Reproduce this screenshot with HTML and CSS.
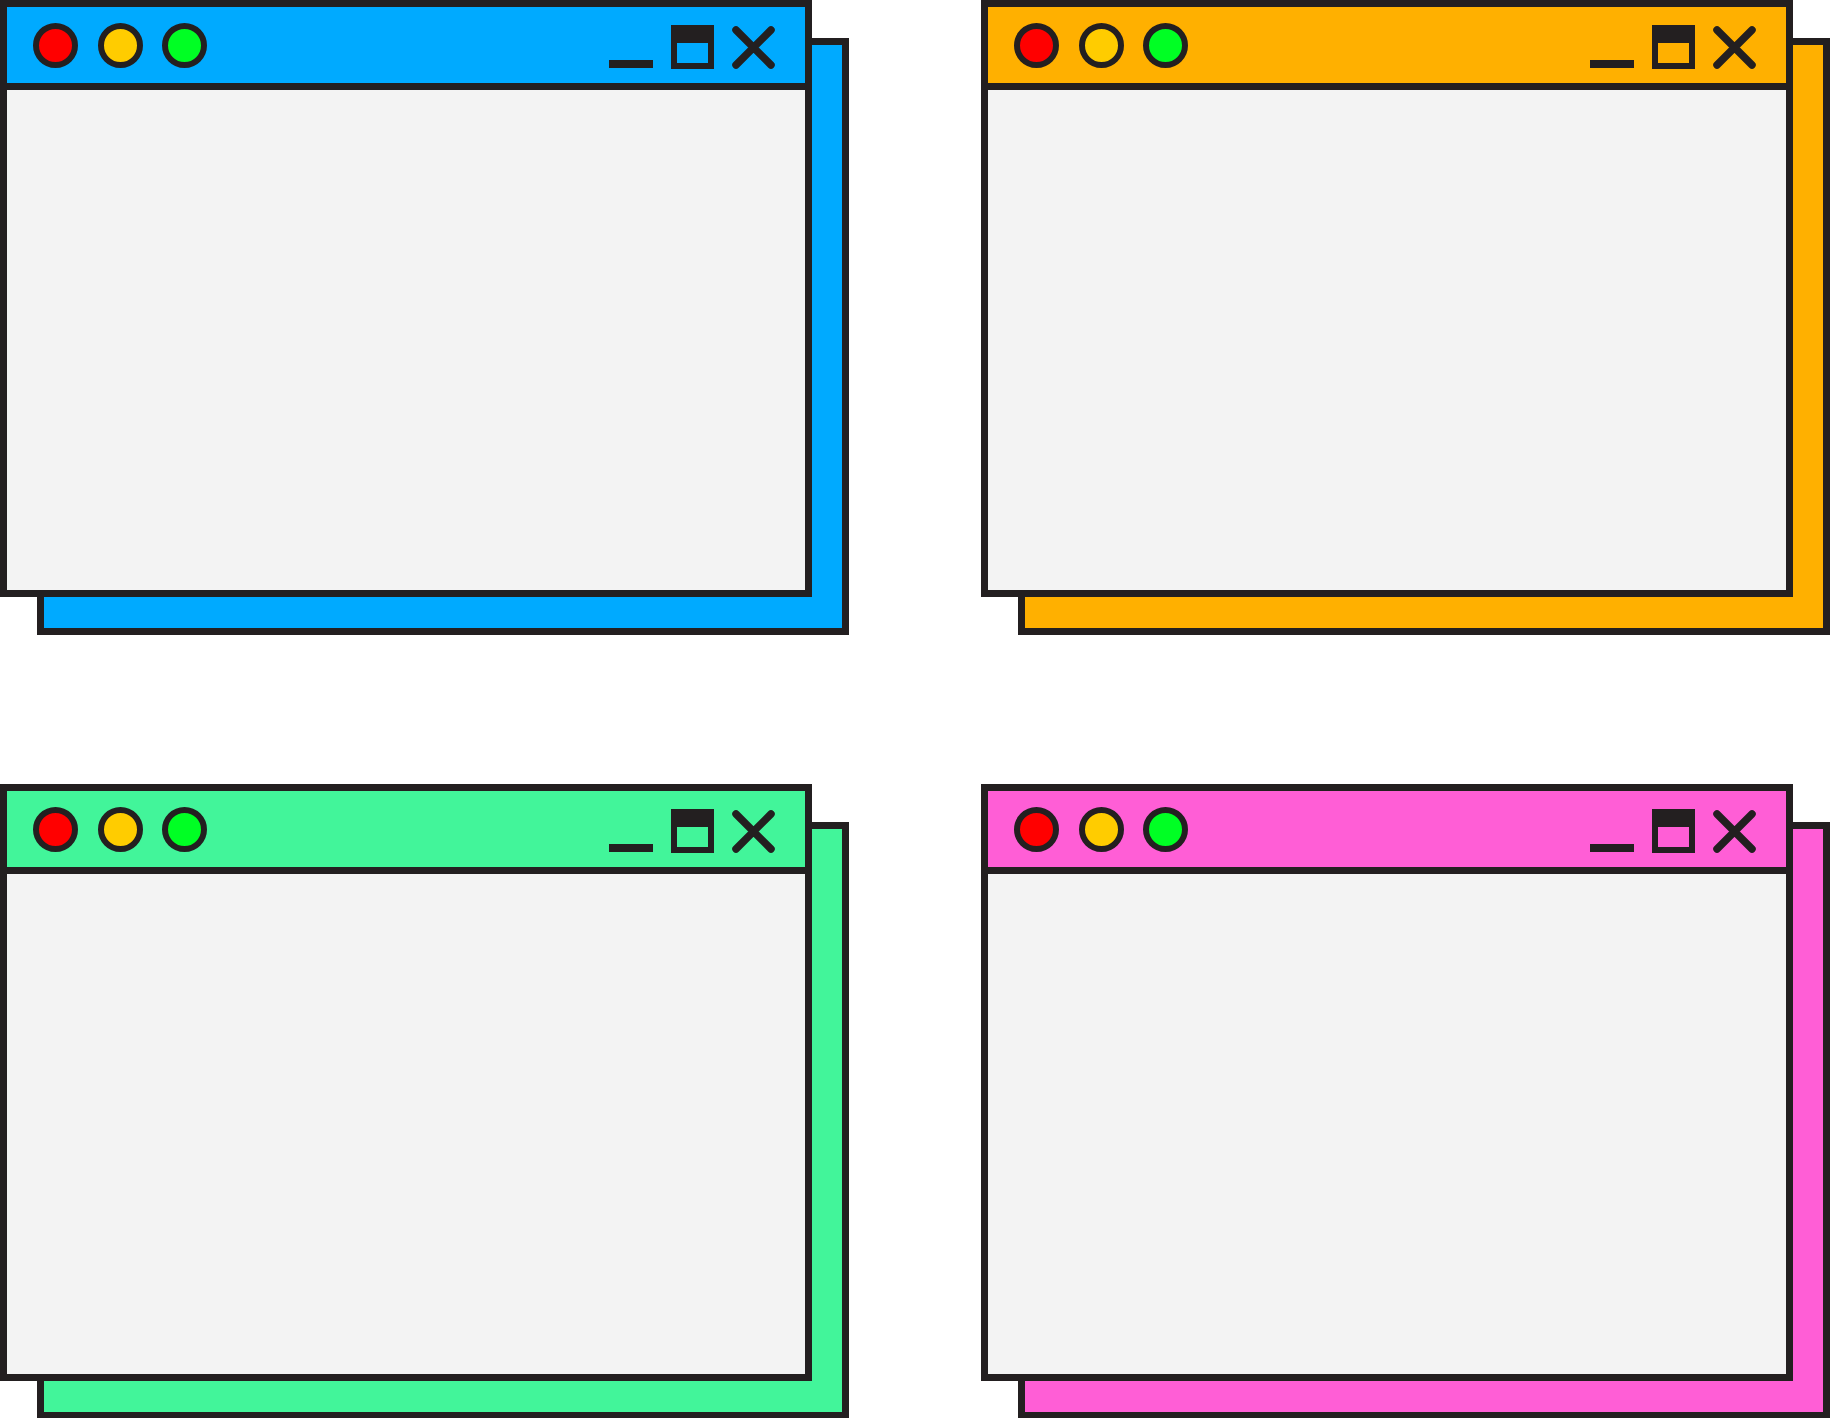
FILE: index.html
```html
<!DOCTYPE html>
<html lang="en">

<head>
    <meta charset="UTF-8">
    <meta name="viewport" content="width=device-width, initial-scale=1.0">
    <title>Window Frames</title>
    <link rel="stylesheet" href="styles.css">
</head>

<body>
    <div class="sheet">
        <div class="stack blue">
            <div class="back"></div>
            <div class="window">
                <div class="titlebar">
                    <div class="lights">
                        <span class="light red"></span>
                        <span class="light yellow"></span>
                        <span class="light green"></span>
                    </div>
                    <svg class="controls" width="166" height="45" viewBox="0 0 166 45">
                        <rect x="0" y="35" width="44" height="8" fill="#231f20" />
                        <path d="M62 0h43v44h-43z M68 18v20h31v-20z" fill="#231f20" fill-rule="evenodd" />
                        <path d="M127 5L162 40M162 5L127 40" stroke="#231f20" stroke-width="7.5" stroke-linecap="round" />
                    </svg>
                </div>
                <div class="content"></div>
            </div>
        </div>

        <div class="stack orange">
            <div class="back"></div>
            <div class="window">
                <div class="titlebar">
                    <div class="lights">
                        <span class="light red"></span>
                        <span class="light yellow"></span>
                        <span class="light green"></span>
                    </div>
                    <svg class="controls" width="166" height="45" viewBox="0 0 166 45">
                        <rect x="0" y="35" width="44" height="8" fill="#231f20" />
                        <path d="M62 0h43v44h-43z M68 18v20h31v-20z" fill="#231f20" fill-rule="evenodd" />
                        <path d="M127 5L162 40M162 5L127 40" stroke="#231f20" stroke-width="7.5" stroke-linecap="round" />
                    </svg>
                </div>
                <div class="content"></div>
            </div>
        </div>

        <div class="stack mint">
            <div class="back"></div>
            <div class="window">
                <div class="titlebar">
                    <div class="lights">
                        <span class="light red"></span>
                        <span class="light yellow"></span>
                        <span class="light green"></span>
                    </div>
                    <svg class="controls" width="166" height="45" viewBox="0 0 166 45">
                        <rect x="0" y="35" width="44" height="8" fill="#231f20" />
                        <path d="M62 0h43v44h-43z M68 18v20h31v-20z" fill="#231f20" fill-rule="evenodd" />
                        <path d="M127 5L162 40M162 5L127 40" stroke="#231f20" stroke-width="7.5" stroke-linecap="round" />
                    </svg>
                </div>
                <div class="content"></div>
            </div>
        </div>

        <div class="stack pink">
            <div class="back"></div>
            <div class="window">
                <div class="titlebar">
                    <div class="lights">
                        <span class="light red"></span>
                        <span class="light yellow"></span>
                        <span class="light green"></span>
                    </div>
                    <svg class="controls" width="166" height="45" viewBox="0 0 166 45">
                        <rect x="0" y="35" width="44" height="8" fill="#231f20" />
                        <path d="M62 0h43v44h-43z M68 18v20h31v-20z" fill="#231f20" fill-rule="evenodd" />
                        <path d="M127 5L162 40M162 5L127 40" stroke="#231f20" stroke-width="7.5" stroke-linecap="round" />
                    </svg>
                </div>
                <div class="content"></div>
            </div>
        </div>
    </div>
</body>

</html>
```

FILE: styles.css
```css
* {
    box-sizing: border-box;
}

body {
    margin: 0;
    background-color: #fff;
    font-family: "Liberation Sans", sans-serif;
}

.sheet {
    display: grid;
    grid-template-columns: 849px 849px;
    grid-template-rows: 635px 635px;
    column-gap: 132px;
    row-gap: 149px;
}

.blue {
    --tone: #00aaff;
}

.orange {
    --tone: #ffb000;
}

.mint {
    --tone: #42f59a;
}

.pink {
    --tone: #ff5ed6;
}

.stack {
    display: grid;
    grid-template-columns: 1fr;
    grid-template-rows: 1fr;
}

.back,
.window {
    grid-area: 1 / 1;
    border: 7px solid #231f20;
}

.back {
    margin: 38px 0 0 37px;
    background-color: var(--tone);
}

.window {
    margin: 0 37px 38px 0;
    background-color: #f3f3f3;
    display: flex;
    flex-direction: column;
}

.titlebar {
    height: 83px;
    flex-shrink: 0;
    border-bottom: 7px solid #231f20;
    background-color: var(--tone);
    display: flex;
    align-items: center;
    padding: 0 30px 0 26px;
}

.lights {
    display: flex;
    gap: 19.5px;
}

.light {
    width: 45px;
    height: 45px;
    border-radius: 50%;
    border: 6.5px solid #231f20;
}

.red {
    background-color: #ff0000;
}

.yellow {
    background-color: #ffcc00;
}

.green {
    background-color: #00ff24;
}

.controls {
    margin-left: auto;
    align-self: flex-end;
    margin-bottom: 13px;
}

.content {
    flex: 1;
}
```
